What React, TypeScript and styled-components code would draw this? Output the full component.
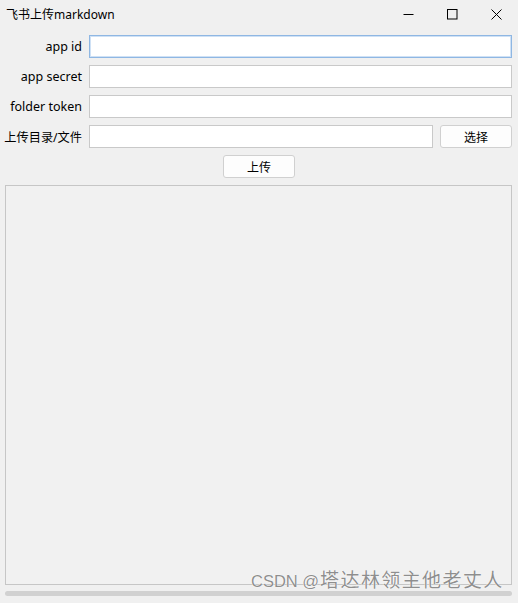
import React from 'react'
import styled, { createGlobalStyle } from 'styled-components'

const GlobalStyle = createGlobalStyle`
	html, body {
		margin: 0;
		padding: 0;
		background: #f0f0f0;
	}
	* {
		box-sizing: border-box;
	}
`

const Window = styled.div`
	position: relative;
	width: 518px;
	height: 603px;
	background: #f0f0f0;
	font-family: "Noto Sans", "Noto Sans CJK SC", sans-serif;
	font-size: 12px;
	color: #000;
	overflow: hidden;
`

const TitleBar = styled.div`
	display: flex;
	align-items: center;
	height: 28px;
`

const Title = styled.div`
	flex: 1;
	padding-left: 6px;
	font-size: 12px;
`

const Controls = styled.div`
	display: flex;
	height: 100%;
`

const ControlButton = styled.div`
	width: 44px;
	height: 100%;
	display: flex;
	align-items: center;
	justify-content: center;
`

const Form = styled.div`
	display: grid;
	grid-template-columns: 82px 1fr 72px;
	grid-auto-rows: 23px;
	column-gap: 7px;
	row-gap: 7px;
	padding: 7px 6px 0 0;
`

const Label = styled.label`
	display: flex;
	align-items: center;
	justify-content: flex-end;
	white-space: nowrap;
	font-size: 12.5px;
`

const CjkLabel = styled(Label)`
	font-size: 12.2px;
`

interface FieldProps {
	wide?: boolean;
	focused?: boolean;
}

const Field = styled.input<FieldProps>`
	grid-column: ${props => props.wide ? '2 / 4' : '2 / 3'};
	height: 23px;
	margin: 0;
	padding: 0 4px;
	background: #fff;
	border: 1px solid ${props => props.focused ? '#8fb7e3' : '#c9c9c9'};
	box-shadow: ${props => props.focused ? 'inset 0 0 0 1px #cfe1f5' : 'none'};
	outline: none;
	font: inherit;
`

const Button = styled.button`
	width: 72px;
	height: 23px;
	margin: 0;
	padding: 0;
	background: #fdfdfd;
	border: 1px solid #d0d0d0;
	border-radius: 3px;
	font-family: inherit;
	font-size: 12px;
	color: #000;
`

const PickButton = styled(Button)`
	grid-column: 3 / 4;
`

const UploadRow = styled.div`
	display: flex;
	justify-content: center;
	padding-top: 7px;
`

const Output = styled.div`
	margin: 7px 6px 0 5px;
	height: 400px;
	border: 1px solid #c6c6c6;
	background: #f1f1f1;
`

const ScrollBar = styled.div`
	margin: 6px 6px 0 5px;
	height: 5px;
	border-radius: 3px;
	background: #d1d1d1;
`

const Watermark = styled.div`
	position: absolute;
	left: 251px;
	top: 568px;
	display: flex;
	align-items: baseline;
	line-height: 22px;
	color: rgba(105, 105, 105, 0.75);
	text-shadow: 0 0 1px #fff, 0 0 1px #fff;
	white-space: nowrap;
`

const WatermarkLatin = styled.span`
	font-family: "Liberation Sans", sans-serif;
	font-size: 16.5px;
	margin-right: 1px;
`

const WatermarkCjk = styled.span`
	font-family: "Noto Sans CJK SC", sans-serif;
	font-size: 19px;
	letter-spacing: 1.4px;
`

const App: React.FC = () => {
	return (
		<Window>
			<GlobalStyle />

			<TitleBar>
				<Title>飞书上传markdown</Title>
				<Controls>
					<ControlButton>
						<svg width='11' height='11' viewBox='0 0 11 11'>
							<path d='M0.5 5.5H10.5' stroke='#000' strokeWidth='1' />
						</svg>
					</ControlButton>
					<ControlButton>
						<svg width='11' height='11' viewBox='0 0 11 11'>
							<rect x='0.5' y='0.5' width='9.5' height='9.5' fill='none' stroke='#000' strokeWidth='1' />
						</svg>
					</ControlButton>
					<ControlButton>
						<svg width='11' height='11' viewBox='0 0 11 11'>
							<path d='M0.5 0.5L10.5 10.5M10.5 0.5L0.5 10.5' stroke='#000' strokeWidth='1' />
						</svg>
					</ControlButton>
				</Controls>
			</TitleBar>

			<Form>
				<Label>app id</Label>
				<Field wide focused />
				<Label>app secret</Label>
				<Field wide />
				<Label>folder token</Label>
				<Field wide />
				<CjkLabel>上传目录/文件</CjkLabel>
				<Field />
				<PickButton>选择</PickButton>
			</Form>

			<UploadRow>
				<Button>上传</Button>
			</UploadRow>

			<Output />
			<ScrollBar />

			<Watermark>
				<WatermarkLatin>CSDN @</WatermarkLatin>
				<WatermarkCjk>塔达林领主他老丈人</WatermarkCjk>
			</Watermark>
		</Window>
	)
}

export default App
